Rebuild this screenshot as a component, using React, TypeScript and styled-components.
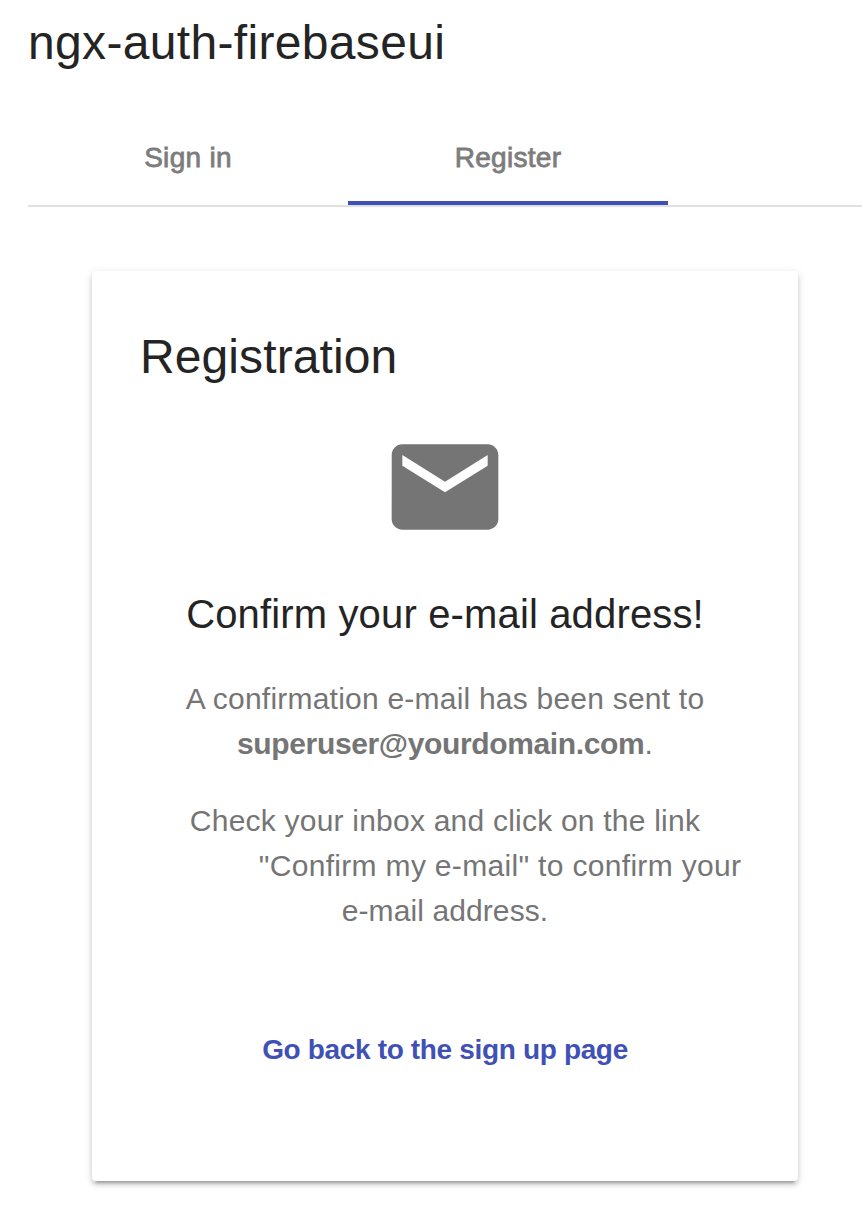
import React from 'react';
import styled, { createGlobalStyle } from 'styled-components';

const GlobalStyle = createGlobalStyle`
  * { box-sizing: border-box; }
  body { margin: 0; background: #fff; font-family: "Liberation Sans", Arial, sans-serif; }
`;

const Page = styled.main`
  height: 1212px;
  overflow: hidden;
  padding: 15px 6px 0 28px;
`;

const Title = styled.h1`
  margin: 0;
  font-size: 48px;
  line-height: 56px;
  font-weight: 400;
  letter-spacing: 0.33px;
  color: #242424;
`;

const Tabs = styled.nav`
  display: flex;
  height: 96px;
  margin-top: 40px;
  border-bottom: 2px solid #e0e0e0;
`;

const Tab = styled.div<{ $active?: boolean }>`
  width: 320px;
  height: 94px;
  padding-top: 4px;
  display: flex;
  align-items: center;
  justify-content: center;
  border-bottom: 4px solid ${p => (p.$active ? '#3f51b5' : 'transparent')};
  font-size: 28px;
  letter-spacing: 0.3px;
  -webkit-text-stroke: 0.8px #7c7c7c;
  color: #7c7c7c;
`;

const Card = styled.section`
  width: 706px;
  height: 910px;
  margin: 64px 0 0 64px;
  padding: 58px 48px 0;
  border-radius: 4px;
  background: #fff;
  box-shadow: 0 6px 2px -4px rgba(0,0,0,.2), 0 4px 4px 0 rgba(0,0,0,.14), 0 2px 10px 0 rgba(0,0,0,.12);
  display: flex;
  flex-direction: column;
  align-items: center;
`;

const CardTitle = styled.h2`
  align-self: flex-start;
  margin: 0;
  font-size: 48px;
  line-height: 56px;
  font-weight: 400;
  letter-spacing: 0.1px;
  color: #242424;
`;

const MailIcon = styled.svg`
  width: 128px;
  height: 128px;
  margin-top: 38px;
  fill: #757575;
`;

const Heading = styled.h3`
  margin: 40px 0 0;
  font-size: 40px;
  line-height: 46px;
  font-weight: 400;
  letter-spacing: 0.15px;
  color: #242424;
`;

const Text = styled.p<{ $top: number }>`
  margin: ${p => p.$top}px 0 0;
  display: flex;
  flex-direction: column;
  align-items: center;
  font-size: 30px;
  line-height: 45px;
  letter-spacing: 0.22px;
  color: #757575;
`;

const Email = styled.b`
  letter-spacing: -0.36px;
`;

const Indented = styled.span`
  padding-left: 110px;
  letter-spacing: 0.32px;
`;

const LastLine = styled.span`
  letter-spacing: 0.1px;
`;

const Back = styled.a`
  margin-top: 93px;
  font-size: 28px;
  line-height: 48px;
  font-weight: 700;
  letter-spacing: -0.34px;
  color: #3f51b5;
`;

export default function App() {
  return (
    <Page>
      <GlobalStyle />
      <Title>ngx-auth-firebaseui</Title>
      <Tabs>
        <Tab>Sign in</Tab>
        <Tab $active>Register</Tab>
      </Tabs>
      <Card>
        <CardTitle>Registration</CardTitle>
        <MailIcon viewBox="0 0 24 24">
          <path d="M20 4H4c-1.100 0-1.990.9-1.990 2L2 18c0 1.100.9 2 2 2h16c1.100 0 2-.9 2-2V6c0-1.100-.9-2-2-2zm0 4l-8 5-8-5V6l8 5 8-5v2z" />
        </MailIcon>
        <Heading>Confirm your e-mail address!</Heading>
        <Text $top={39}>
          <span>A confirmation e-mail has been sent to</span>
          <span><Email>superuser@yourdomain.com</Email>.</span>
        </Text>
        <Text $top={32}>
          <span>Check your inbox and click on the link</span>
          <Indented>"Confirm my e-mail" to confirm your</Indented>
          <LastLine>e-mail address.</LastLine>
        </Text>
        <Back>Go back to the sign up page</Back>
      </Card>
    </Page>
  );
}
